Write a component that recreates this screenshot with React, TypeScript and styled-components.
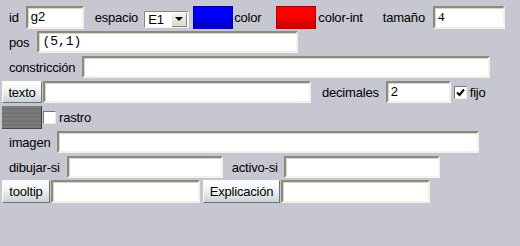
import styled, { createGlobalStyle } from "styled-components";

const GlobalStyle = createGlobalStyle`
  body {
    margin: 0;
    background: #c6c7d0;
    font-family: "Liberation Sans", Arial, sans-serif;
  }
`;

const Panel = styled.div`
  width: 520px;
  height: 246px;
  display: flex;
  flex-direction: column;
  background: #c6c7d0;
  color: #000;
`;

const Row = styled.div<{ $top: number; $h: number }>`
  display: flex;
  align-items: center;
  margin-top: ${(p) => p.$top}px;
  height: ${(p) => p.$h}px;
`;

const Label = styled.span<{ $ml?: number; $mr?: number }>`
  font-size: 13px;
  margin-left: ${(p) => p.$ml ?? 0}px;
  margin-right: ${(p) => p.$mr ?? 0}px;
  white-space: nowrap;
  letter-spacing: -0.2px;
`;

const Field = styled.div<{ $w: number; $ml?: number; $font?: string }>`
  box-sizing: border-box;
  width: ${(p) => p.$w}px;
  height: 100%;
  margin-left: ${(p) => p.$ml ?? 0}px;
  background: #fff;
  border-top: 2px solid #8c8a7d;
  border-left: 2px solid #8c8a7d;
  border-right: 2px solid #f3f1ea;
  border-bottom: 2px solid #f3f1ea;
  box-shadow: inset 1px 1px 0 #d8d6cc;
  font-family: ${(p) => p.$font ?? `"Liberation Sans", Arial, sans-serif`};
  font-size: 13px;
  line-height: 18px;
  padding-left: 3px;
`;

const Select = styled.div`
  box-sizing: border-box;
  width: 45px;
  height: 17px;
  align-self: flex-end;
  margin: 0 0 1px 6px;
  display: flex;
  align-items: center;
  justify-content: space-between;
  background: #fff;
  border-top: 1px solid #8c8a7d;
  border-left: 1px solid #8c8a7d;
  border-right: 1px solid #f3f1ea;
  border-bottom: 1px solid #f3f1ea;
  font-size: 13px;
  padding-left: 3px;
`;

const ArrowBtn = styled.div`
  width: 14px;
  height: 13px;
  margin-right: 1px;
  display: flex;
  align-items: center;
  justify-content: center;
  background: linear-gradient(#f6f6ee, #d8d8cc);
  border-right: 1px solid #888;
  border-bottom: 1px solid #888;
  &::after {
    content: "";
    border-left: 4px solid transparent;
    border-right: 4px solid transparent;
    border-top: 4px solid #000;
  }
`;

const Swatch = styled.div<{ $c1: string; $c2: string; $ml?: number }>`
  box-sizing: border-box;
  width: 40px;
  height: 23px;
  margin-left: ${(p) => p.$ml ?? 0}px;
  background: linear-gradient(${(p) => p.$c1} 40%, ${(p) => p.$c2});
  border: 1px solid rgba(0, 0, 0, 0.25);
`;

const PushButton = styled.div<{ $w: number; $ml?: number }>`
  box-sizing: border-box;
  width: ${(p) => p.$w}px;
  height: 100%;
  margin-left: ${(p) => p.$ml ?? 0}px;
  display: flex;
  align-items: center;
  justify-content: center;
  font-size: 13px;
  letter-spacing: -0.2px;
  background: linear-gradient(#ffffff, #eef3f3 45%, #c9d3d3);
  border-right: 1px solid #6f7272;
  border-bottom: 1px solid #6f7272;
  border-top: 1px solid #fafafa;
  border-left: 1px solid #fafafa;
`;

const GrayButton = styled.div`
  box-sizing: border-box;
  width: 40px;
  height: 100%;
  margin-left: 2px;
  background: repeating-linear-gradient(
    #7b7b7b 0,
    #7b7b7b 2px,
    #737373 2px,
    #737373 4px
  );
  border-right: 1px solid #3a3a3a;
  border-bottom: 1px solid #4a4a4a;
`;

const Check = styled.div<{ $ml?: number }>`
  box-sizing: border-box;
  width: 13px;
  height: 13px;
  margin-left: ${(p) => p.$ml ?? 0}px;
  background: #fff;
  border-top: 1px solid #7a786c;
  border-left: 1px solid #7a786c;
  border-right: 1px solid #ecebe4;
  border-bottom: 1px solid #ecebe4;
  display: flex;
  align-items: center;
  justify-content: center;
`;

export default function App() {
  return (
    <>
      <GlobalStyle />
      <Panel>
        <Row $top={6} $h={23}>
          <Label $ml={9}>id</Label>
          <Field $w={58} $ml={7}>g2</Field>
          <Label $ml={11}>espacio</Label>
          <Select>
            E1
            <ArrowBtn />
          </Select>
          <Swatch $c1="#0000ff" $c2="#0000c4" $ml={4} />
          <Label $ml={1}>color</Label>
          <Swatch $c1="#ff0000" $c2="#c80000" $ml={15} />
          <Label $ml={2}>color-int</Label>
          <Label $ml={20}>tamaño</Label>
          <Field $w={72} $ml={8} $font={`"Liberation Serif", serif`}>
            4
          </Field>
        </Row>
        <Row $top={2} $h={22}>
          <Label $ml={9}>pos</Label>
          <Field $w={261} $ml={8} $font={`"Liberation Mono", monospace`}>
            (5,1)
          </Field>
        </Row>
        <Row $top={3} $h={22}>
          <Label $ml={9}>constricción</Label>
          <Field $w={408} $ml={7} />
        </Row>
        <Row $top={3} $h={22}>
          <PushButton $w={40} $ml={2}>texto</PushButton>
          <Field $w={268} $ml={1} />
          <Label $ml={11}>decimales</Label>
          <Field $w={65} $ml={7}>2</Field>
          <Check $ml={3}>
            <svg width="9" height="9" viewBox="0 0 9 9">
              <path d="M1 4.5 L3.5 7 L8 1.5" stroke="#000" strokeWidth="2" fill="none" />
            </svg>
          </Check>
          <Label $ml={3}>fijo</Label>
        </Row>
        <Row $top={3} $h={23}>
          <GrayButton />
          <Check $ml={1} />
          <Label $ml={3}>rastro</Label>
        </Row>
        <Row $top={2} $h={22}>
          <Label $ml={9}>imagen</Label>
          <Field $w={422} $ml={7} />
        </Row>
        <Row $top={3} $h={22}>
          <Label $ml={9}>dibujar-si</Label>
          <Field $w={156} $ml={7} />
          <Label $ml={9}>activo-si</Label>
          <Field $w={156} $ml={6} />
        </Row>
        <Row $top={2} $h={23}>
          <PushButton $w={48} $ml={2}>tooltip</PushButton>
          <Field $w={149} $ml={1} />
          <PushButton $w={77} $ml={3}>Explicación</PushButton>
          <Field $w={149} $ml={1} />
        </Row>
      </Panel>
    </>
  );
}
